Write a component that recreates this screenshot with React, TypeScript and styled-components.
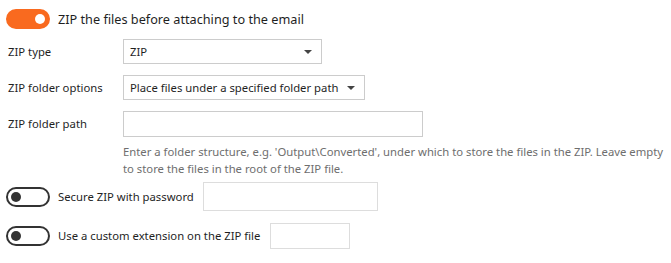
import React from "react";
import styled, { createGlobalStyle } from "styled-components";

const Global = createGlobalStyle`
  html, body { margin: 0; padding: 0; background: #ffffff; }
  body { font-family: "Noto Sans", "Open Sans", sans-serif; font-size: 11.3px; line-height: 16px; color: #1f1f1f; }
`;

const Page = styled.div`
  width: 671px;
  height: 263px;
  box-sizing: border-box;
  padding: 9px 0 0 6px;
  display: flex;
  flex-direction: column;
`;

const ToggleRow = styled.div<{ $mt?: number }>`
  display: flex;
  align-items: center;
  gap: 8px;
  margin-top: ${(p) => p.$mt ?? 0}px;
`;

const Track = styled.span<{ $on: boolean }>`
  position: relative;
  display: inline-block;
  box-sizing: border-box;
  width: 44px;
  height: 20px;
  border-radius: 10px;
  flex: none;
  background: ${(p) => (p.$on ? "#f96a1f" : "#ffffff")};
  border: 2px solid ${(p) => (p.$on ? "#f96a1f" : "#333333")};
`;

const Knob = styled.span<{ $on: boolean }>`
  position: absolute;
  top: 3px;
  left: ${(p) => (p.$on ? "27px" : "3px")};
  width: 10px;
  height: 10px;
  border-radius: 50%;
  background: ${(p) => (p.$on ? "#ffffff" : "#333333")};
`;

const Label = styled.span<{ $big?: boolean }>`
  color: #1f1f1f;
  white-space: nowrap;
  font-size: ${(p) => (p.$big ? "12.7px" : "inherit")};
`;

const Form = styled.div`
  display: grid;
  grid-template-columns: 115px auto;
  align-items: center;
  row-gap: 11px;
  margin: 10px 0 0 2px;
`;

const FieldLabel = styled.div`
  color: #1f1f1f;
`;

const Select = styled.div<{ $w: number }>`
  box-sizing: border-box;
  width: ${(p) => p.$w}px;
  height: 25px;
  border: 1px solid #cccccc;
  display: flex;
  align-items: center;
  justify-content: space-between;
  padding: 0 9px 0 6px;
  background: #fff;
  white-space: nowrap;
`;

const Arrow = styled.span`
  width: 0;
  height: 0;
  border-left: 4px solid transparent;
  border-right: 4px solid transparent;
  border-top: 4px solid #444;
`;

const TextBox = styled.div<{ $w: number; $h: number; $c?: string }>`
  box-sizing: border-box;
  width: ${(p) => p.$w}px;
  height: ${(p) => p.$h}px;
  border: 1px solid ${(p) => p.$c ?? "#cccccc"};
  background: #fff;
`;

const Help = styled.div`
  grid-column: 2;
  width: 548px;
  color: #6e6e6e;
  line-height: 17px;
  margin-top: -5px;
`;

const Inline = styled.div<{ $gap: number }>`
  display: flex;
  align-items: center;
  gap: ${(p) => p.$gap}px;
`;

function Toggle({ on }: { on: boolean }) {
  return (
    <Track $on={on}>
      <Knob $on={on} />
    </Track>
  );
}

export default function App() {
  return (
    <>
      <Global />
      <Page>
        <ToggleRow>
          <Toggle on />
          <Label $big>ZIP the files before attaching to the email</Label>
        </ToggleRow>
        <Form>
          <FieldLabel>ZIP type</FieldLabel>
          <Select $w={199}>
            <span>ZIP</span>
            <Arrow />
          </Select>
          <FieldLabel>ZIP folder options</FieldLabel>
          <Select $w={242}>
            <span>Place files under a specified folder path</span>
            <Arrow />
          </Select>
          <FieldLabel>ZIP folder path</FieldLabel>
          <TextBox $w={300} $h={26} />
          <Help>
            Enter a folder structure, e.g. 'Output\Converted', under which to store the files in the ZIP. Leave empty to store the files in the root of the ZIP file.
          </Help>
        </Form>
        <ToggleRow $mt={5}>
          <Toggle on={false} />
          <Inline $gap={9}>
            <Label>Secure ZIP with password</Label>
            <TextBox $w={175} $h={29} $c="#dddddd" />
          </Inline>
        </ToggleRow>
        <ToggleRow $mt={12}>
          <Toggle on={false} />
          <Inline $gap={10}>
            <Label>Use a custom extension on the ZIP file</Label>
            <TextBox $w={80} $h={26} $c="#dddddd" />
          </Inline>
        </ToggleRow>
      </Page>
    </>
  );
}
